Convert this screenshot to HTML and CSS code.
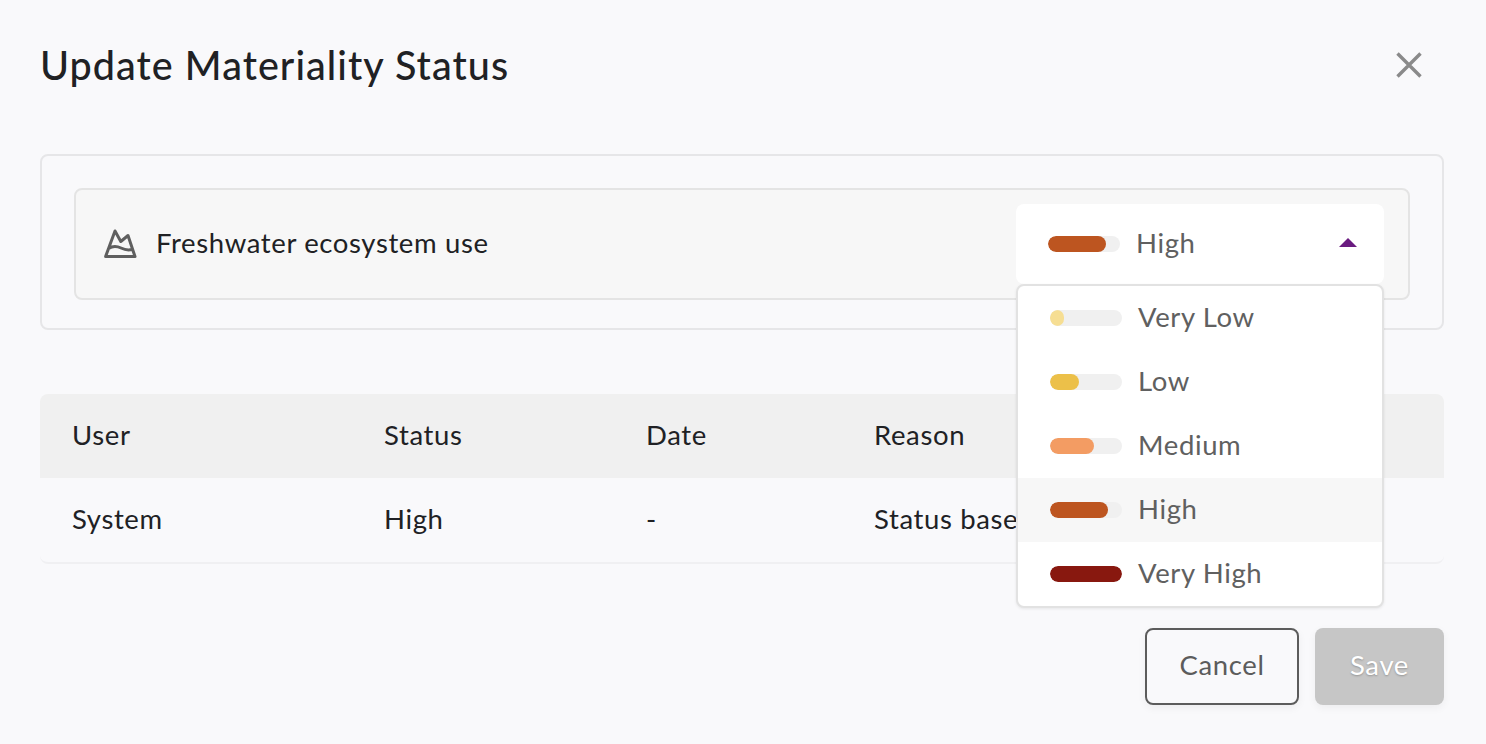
FILE: index.html
```html
<!DOCTYPE html>
<html lang="en">
<head>
<meta charset="utf-8">
<title>Update Materiality Status</title>
<link rel="stylesheet" href="styles.css">
</head>
<body>
<main class="dialog">
  <header class="head">
    <h1 class="title">Update Materiality Status</h1>
    <button class="close" aria-label="Close">
      <svg width="26" height="26" viewBox="0 0 26 26"><path d="M1.5 1.5 L24.5 24.5 M24.5 1.5 L1.5 24.5" stroke="#8a8a8a" stroke-width="3.4" fill="none"/></svg>
    </button>
  </header>
  <section class="card">
    <div class="topic">
      <div class="topic-name">
        <svg class="topic-icon" width="34" height="32" viewBox="0 0 34 32"><path d="M1.6 28.5 L11 3 L16.8 13.5 L24 7.5 L31 28.5 Z M4.5 20.5 C9 17.5 13 18 17 20 C21 22 24 22.5 28 21.5" stroke="#5f5f5f" stroke-width="3" fill="none" stroke-linejoin="round"/></svg>
        <span>Freshwater ecosystem use</span>
      </div>
      <div class="select">
        <div class="select-value">
          <span class="bar"><span class="fill high" style="width:58px"></span></span>
          <span class="select-label">High</span>
          <span class="caret"></span>
        </div>
        <ul class="menu">
          <li class="option"><span class="bar"><span class="fill very-low" style="width:14px"></span></span>Very Low</li>
          <li class="option"><span class="bar"><span class="fill low" style="width:29px"></span></span>Low</li>
          <li class="option"><span class="bar"><span class="fill medium" style="width:44px"></span></span>Medium</li>
          <li class="option active"><span class="bar"><span class="fill high" style="width:58px"></span></span>High</li>
          <li class="option"><span class="bar"><span class="fill very-high" style="width:72px"></span></span>Very High</li>
        </ul>
      </div>
    </div>
  </section>
  <section class="table">
    <div class="row row-head">
      <span>User</span><span>Status</span><span>Date</span><span>Reason</span>
    </div>
    <div class="row row-body">
      <span>System</span><span>High</span><span>-</span><span>Status based on the assessment</span>
    </div>
  </section>
  <footer class="actions">
    <button class="btn cancel">Cancel</button>
    <button class="btn save">Save</button>
  </footer>
</main>
</body>
</html>
```
FILE: styles.css
```css
* { box-sizing: border-box; }
html, body { margin: 0; height: 100%; }
body {
  background: #f9f9fb;
  font-family: "Lato", "Open Sans", sans-serif;
  font-size: 27.5px;
  letter-spacing: .63px;
  color: #202124;
  overflow: hidden;
}
.dialog { padding: 0 42px 0 40px; }
.head {
  display: flex;
  justify-content: space-between;
  align-items: center;
  height: 132px;
  padding-bottom: 2px;
}
.title { margin: 0; font-size: 39.5px; font-weight: 500; line-height: 1.2; letter-spacing: 1.05px; }
.close { border: 0; background: none; padding: 0; margin-right: 22px; display: flex; }
.card {
  height: 176px;
  margin-top: 22px;
  border: 2px solid #e6e6e8;
  border-radius: 8px;
  padding: 32px;
}
.topic {
  height: 112px;
  background: #f7f7f7;
  border: 2px solid #e4e4e4;
  border-radius: 8px;
  display: flex;
  align-items: center;
  justify-content: space-between;
  padding: 0 24px 0 28px;
}
.topic-name { display: flex; align-items: center; gap: 18px; }
.topic-name span { padding-bottom: 4px; }
.topic-icon { display: block; }
.select { position: relative; width: 368px; height: 80px; }
.select-value {
  height: 80px;
  background: #fff;
  border-radius: 8px;
  display: flex;
  align-items: center;
  padding: 0 27px 0 32px;
  color: #606060;
}
.select-label { margin-left: 16px; flex: 1; padding-bottom: 4px; }
.caret {
  width: 0; height: 0;
  margin-bottom: 3px;
  border-left: 9.5px solid transparent;
  border-right: 9.5px solid transparent;
  border-bottom: 9.5px solid #6a1b80;
}
.bar {
  display: block;
  flex: none;
  width: 72px;
  height: 16px;
  border-radius: 8px;
  background: #f0f0f0;
  overflow: hidden;
}
.fill { display: block; height: 100%; border-radius: 8px; }
.very-low { background: #f6de93; }
.low { background: #ecc049; }
.medium { background: #f39c63; }
.high { background: #bd5520; }
.very-high { background: #88180f; }
.menu {
  position: absolute;
  top: 80px;
  left: 0;
  width: 368px;
  height: 324px;
  margin: 0;
  padding: 0;
  list-style: none;
  background: #fff;
  border: 2px solid #e2e2e2;
  border-radius: 8px;
  box-shadow: 0 1px 3px rgba(0,0,0,.08);
  z-index: 2;
  overflow: hidden;
}
.option {
  height: 64px;
  display: flex;
  align-items: center;
  gap: 16px;
  padding: 0 0 4px 32px;
  color: #606060;
}
.option .bar { margin-top: 4px; }
.active { background: #f7f7f7; }
.table { margin-top: 64px; }
.row {
  display: grid;
  grid-template-columns: 312px 262px 228px 1fr;
  align-items: center;
  padding: 0 0 4px 32px;
  white-space: nowrap;
  overflow: hidden;
}
.row-head { height: 84px; background: #f0f0f0; border-radius: 8px 8px 0 0; }
.row-body { height: 86px; border-bottom: 2px solid #f0f0f2; border-radius: 0 0 8px 8px; }
.actions { display: flex; justify-content: flex-end; gap: 16px; margin-top: 64px; }
.btn {
  height: 77px;
  padding: 0 0 4px;
  border-radius: 8px;
  font: inherit;
  letter-spacing: inherit;
  box-shadow: 0 3px 8px rgba(0,0,0,.05);
}
.cancel { width: 154px; background: transparent; border: 2px solid #5c5c5c; color: #5c5c5c; }
.save { width: 129px; background: #c6c6c6; border: 0; color: #fff; text-shadow: 0 1px 2px rgba(0,0,0,.25); }
```
